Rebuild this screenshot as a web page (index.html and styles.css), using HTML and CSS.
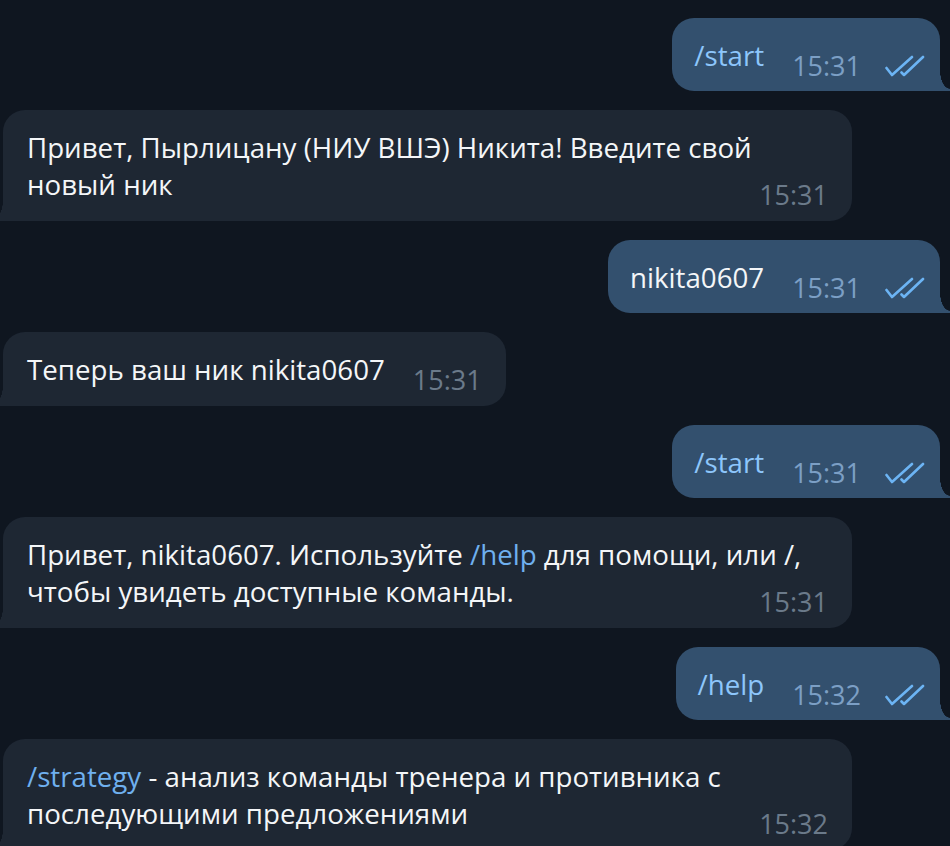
FILE: index.html
```html
<!DOCTYPE html>
<html lang="ru">
<head>
<meta charset="utf-8">
<link rel="stylesheet" href="styles.css">
</head>
<body>
<div class="chat">
  <div class="msg out">
    <div class="bubble"><span class="cmd">/start</span><span class="meta"><span class="time">15:31</span><svg class="ticks" viewBox="0 0 40 22" width="40" height="22"><path d="M1.5 13 L7 20 L27 2 M16.5 17.5 L19 20 L38 2"/></svg></span></div>
  </div>
  <div class="msg in">
    <div class="bubble">Привет, Пырлицану (НИУ ВШЭ) Никита! Введите свой новый ник<span class="meta"><span class="time">15:31</span></span></div>
  </div>
  <div class="msg out">
    <div class="bubble">nikita0607<span class="meta"><span class="time">15:31</span><svg class="ticks" viewBox="0 0 40 22" width="40" height="22"><path d="M1.5 13 L7 20 L27 2 M16.5 17.5 L19 20 L38 2"/></svg></span></div>
  </div>
  <div class="msg in">
    <div class="bubble">Теперь ваш ник nikita0607<span class="meta"><span class="time">15:31</span></span></div>
  </div>
  <div class="msg out">
    <div class="bubble"><span class="cmd">/start</span><span class="meta"><span class="time">15:31</span><svg class="ticks" viewBox="0 0 40 22" width="40" height="22"><path d="M1.5 13 L7 20 L27 2 M16.5 17.5 L19 20 L38 2"/></svg></span></div>
  </div>
  <div class="msg in">
    <div class="bubble">Привет, nikita0607. Используйте <span class="link">/help</span> для помощи, или /, чтобы увидеть доступные команды.<span class="meta"><span class="time">15:31</span></span></div>
  </div>
  <div class="msg out">
    <div class="bubble"><span class="cmd">/help</span><span class="meta"><span class="time">15:32</span><svg class="ticks" viewBox="0 0 40 22" width="40" height="22"><path d="M1.5 13 L7 20 L27 2 M16.5 17.5 L19 20 L38 2"/></svg></span></div>
  </div>
  <div class="msg in">
    <div class="bubble"><span class="link">/strategy</span> - анализ команды тренера и противника с последующими предложениями<span class="meta"><span class="time">15:32</span></span></div>
  </div>
</div>
</body>
</html>
```

FILE: styles.css
```css
html, body {
  margin: 0;
  padding: 0;
  background: #0f1620;
  overflow: hidden;
}

body {
  width: 950px;
  height: 846px;
  font-family: "Open Sans", "Noto Sans", sans-serif;
  font-size: 27.7px;
  color: #f4f6f8;
}

.chat {
  display: flex;
  flex-direction: column;
  gap: 19px;
  padding-top: 18px;
}

.msg {
  display: flex;
}

.msg.out {
  justify-content: flex-end;
  padding-right: 10px;
}

.msg.in {
  justify-content: flex-start;
  padding-left: 3px;
}

.bubble {
  position: relative;
  max-width: 801px;
  line-height: 37px;
  padding: 19px 24px 18px 24px;
  border-radius: 22px;
}

.in .bubble {
  background: #1e2733;
  border-bottom-left-radius: 0;
}

.out .bubble {
  background: #33506e;
  padding: 19px 15px 17px 22px;
  border-bottom-right-radius: 0;
}

.out .bubble::after {
  content: "";
  position: absolute;
  right: -10px;
  bottom: 0;
  width: 10px;
  height: 20px;
  background: radial-gradient(10px 18px at 100% 0, transparent 97%, #33506e 100%);
}

.in .bubble::after {
  content: "";
  position: absolute;
  left: -10px;
  bottom: 0;
  width: 10px;
  height: 20px;
  background: radial-gradient(10px 18px at 0 0, transparent 97%, #1e2733 100%);
}

.cmd {
  color: #8dc6fb;
}

.link {
  color: #6fb0ef;
}

.meta {
  float: right;
  display: flex;
  align-items: center;
  gap: 24px;
  margin: 10px 0 -10px 28px;
  line-height: 37px;
}

.time {
  font-size: 27px;
  color: #6b7a8a;
}

.out .time {
  color: #7c9fc5;
}

.ticks {
  display: block;
  fill: none;
  stroke: #6cb4f4;
  stroke-width: 2.6;
  stroke-linecap: round;
  stroke-linejoin: round;
}
```
